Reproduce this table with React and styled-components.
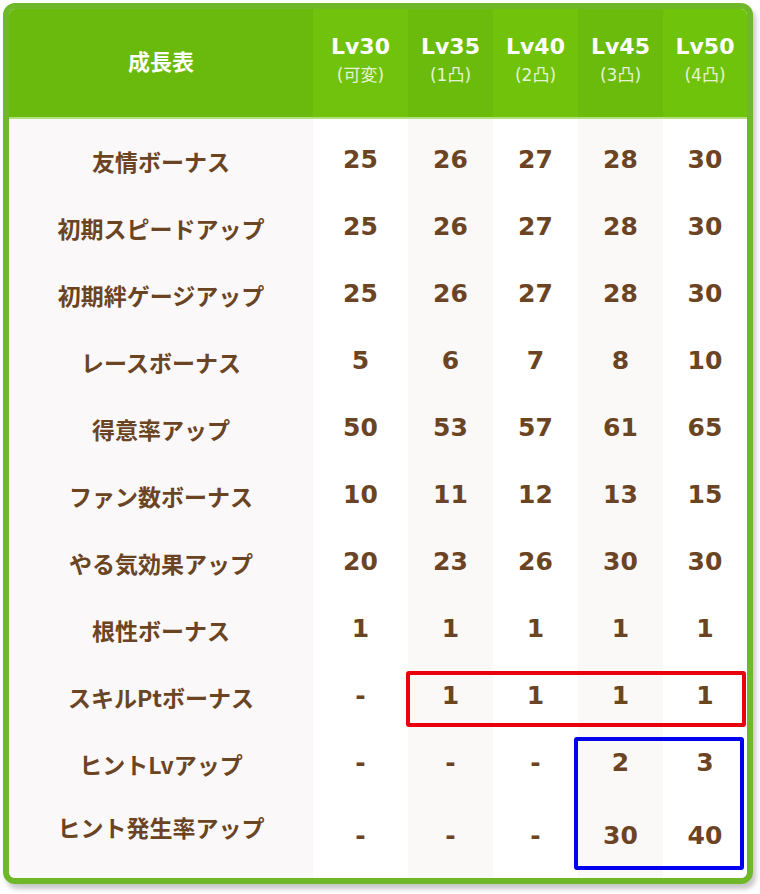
import React from 'react';
import styled, { createGlobalStyle } from 'styled-components';

const GlobalStyle = createGlobalStyle`
  html, body {
    margin: 0;
    padding: 0;
    background: #ffffff;
  }
  body {
    font-family: "DejaVu Sans", "Noto Sans CJK JP", sans-serif;
  }
`;

const Page = styled.div`
  width: 760px;
  height: 894px;
  padding: 3px 0 0 3px;
  box-sizing: border-box;
`;

const Card = styled.div`
  position: relative;
  width: 750px;
  box-sizing: border-box;
  border: 6px solid #6fb82a;
  border-radius: 12px;
  background: #ffffff;
  overflow: hidden;
  box-shadow: 3px 5px 5px rgba(0, 0, 0, 0.22);
`;

const Grid = styled.div`
  display: grid;
  grid-template-columns: 304px 95px 85px 85px 85px 84px;
`;

const headGreens = ['#6aba0e', '#70c20c', '#6abb0c', '#70c20b', '#6abb0c', '#70c30b'];
const bodyBgs = ['#faf8f8', '#ffffff', '#fbf8f8', '#ffffff', '#fbf8f8', '#ffffff'];

const HeadCell = styled.div`
  height: 108px;
  border-bottom: 2px solid #b2e07c;
  background: ${p => headGreens[p.$col]};
  display: flex;
  flex-direction: column;
  align-items: center;
  justify-content: center;
  color: #ffffff;
`;

const TitleText = styled.div`
  font-family: "Noto Sans CJK JP", sans-serif;
  font-weight: 700;
  font-size: 22px;
  margin-top: -6px;
`;

const LvText = styled.div`
  font-family: "DejaVu Sans", sans-serif;
  font-weight: 700;
  font-size: 22px;
  line-height: 26px;
  margin-top: -2px;
`;

const SubText = styled.div`
  font-family: "DejaVu Sans", "Noto Sans CJK JP", sans-serif;
  font-size: 17px;
  line-height: 30px;
  color: #e6f4d4;
`;

const Cell = styled.div`
  height: 67px;
  padding-top: ${p => (p.$first ? 7 : 0)}px;
  padding-bottom: ${p => (p.$last ? 15 : 0)}px;
  background: ${p => bodyBgs[p.$col]};
  display: flex;
  align-items: center;
  justify-content: center;
  color: #6b4423;
  font-weight: 700;
`;

const Label = styled.span`
  font-family: "Noto Sans CJK JP", sans-serif;
  font-size: 23px;
  margin-top: ${p => (p.$last ? -6 : 2)}px;
`;

const Num = styled.span`
  font-family: "DejaVu Sans", sans-serif;
  font-size: 25px;
  margin-top: ${p => (p.$last ? 12 : 0)}px;
`;

const Highlight = styled.div`
  position: absolute;
  box-sizing: border-box;
  border: 4px solid ${p => p.$color};
  border-radius: 3px;
  pointer-events: none;
`;

const levels = [
  ['Lv30', '(可変)'],
  ['Lv35', '(1凸)'],
  ['Lv40', '(2凸)'],
  ['Lv45', '(3凸)'],
  ['Lv50', '(4凸)'],
];

const rows = [
  ['友情ボーナス', '25', '26', '27', '28', '30'],
  ['初期スピードアップ', '25', '26', '27', '28', '30'],
  ['初期絆ゲージアップ', '25', '26', '27', '28', '30'],
  ['レースボーナス', '5', '6', '7', '8', '10'],
  ['得意率アップ', '50', '53', '57', '61', '65'],
  ['ファン数ボーナス', '10', '11', '12', '13', '15'],
  ['やる気効果アップ', '20', '23', '26', '30', '30'],
  ['根性ボーナス', '1', '1', '1', '1', '1'],
  ['スキルPtボーナス', '-', '1', '1', '1', '1'],
  ['ヒントLvアップ', '-', '-', '-', '2', '3'],
  ['ヒント発生率アップ', '-', '-', '-', '30', '40'],
];

export default function App() {
  return (
    <Page>
      <GlobalStyle />
      <Card>
        <Grid>
          <HeadCell $col={0}>
            <TitleText>成長表</TitleText>
          </HeadCell>
          {levels.map(([lv, sub], i) => (
            <HeadCell key={lv} $col={i + 1}>
              <LvText>{lv}</LvText>
              <SubText>{sub}</SubText>
            </HeadCell>
          ))}
          {rows.map((row, r) =>
            row.map((val, c) => {
              const first = r === 0;
              const last = r === rows.length - 1;
              return (
                <Cell key={`${r}-${c}`} $col={c} $first={first} $last={last}>
                  {c === 0 ? <Label $last={last}>{val}</Label> : <Num $last={last}>{val}</Num>}
                </Cell>
              );
            })
          )}
        </Grid>
        <Highlight $color="#e8000c" style={{ left: 397, top: 662, width: 340, height: 56 }} />
        <Highlight $color="#0000ee" style={{ left: 565, top: 728, width: 170, height: 133 }} />
      </Card>
    </Page>
  );
}
